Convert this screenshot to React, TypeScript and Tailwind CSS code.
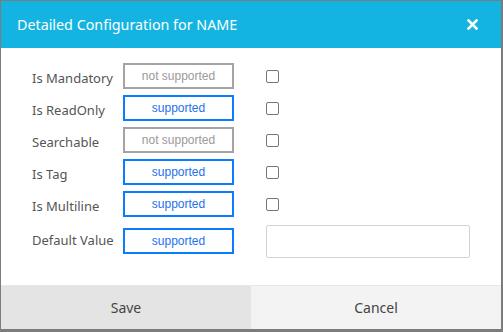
const rows = [
  { label: "Is Mandatory", supported: false },
  { label: "Is ReadOnly", supported: true },
  { label: "Searchable", supported: false },
  { label: "Is Tag", supported: true },
  { label: "Is Multiline", supported: true },
];

function StatusBox({ supported }: { supported: boolean }) {
  return (
    <div
      className={
        supported
          ? "flex h-[26px] w-[111px] items-center justify-center border-2 border-[#0a7cff] text-[12px] text-[#1a73f0]"
          : "flex h-[26px] w-[111px] items-center justify-center border-2 border-[#a3a3a3] text-[12px] text-[#9a9a9a]"
      }
      style={{ fontFamily: '"Liberation Sans", Arial, sans-serif' }}
    >
      {supported ? "supported" : "not supported"}
    </div>
  );
}

export default function App() {
  return (
    <div
      className="flex h-[332px] w-[503px] bg-[#7c7c7c] pt-[1px] pr-[2px] pb-[3px] pl-[1px]"
      style={{ fontFamily: '"Noto Sans", "Open Sans", sans-serif' }}
    >
      <div className="flex flex-1 flex-col bg-white">
        <div className="flex h-[47px] items-center justify-between bg-[#14b4e2] pl-[16px] pr-[23px]">
          <span className="text-[14.3px] text-white">Detailed Configuration for NAME</span>
          <svg width="11" height="11" viewBox="0 0 11 11">
            <path d="M1.5 1.5 L9.5 9.5 M9.5 1.5 L1.5 9.5" stroke="white" strokeWidth="2.6" strokeLinecap="square" />
          </svg>
        </div>

        <div className="flex flex-1 flex-col pt-[12px] pl-[31px]">
          {rows.map((row) => (
            <div key={row.label} className="flex h-[32px] items-center">
              <div className="w-[91px] pt-[6px] text-[13px] text-[#555]">{row.label}</div>
              <StatusBox supported={row.supported} />
              <div className="ml-[32px] h-[13px] w-[13px] rounded-[2px] border border-[#767676] bg-white"></div>
            </div>
          ))}
          <div className="mt-[4px] flex h-[34px] items-center">
            <div className="w-[91px] text-[13px] text-[#555]">Default Value</div>
            <StatusBox supported={true} />
            <div className="ml-[32px] h-[33px] w-[204px] rounded-[2px] border border-[#d2d2d8] bg-white"></div>
          </div>
        </div>

        <div className="flex h-[44px] border-t border-[#e8e8e8]">
          <button className="flex-1 bg-[#e4e4e4] text-[14px] text-[#444]">Save</button>
          <button className="flex-1 bg-[#f3f3f3] text-[14px] text-[#444]">Cancel</button>
        </div>
      </div>
    </div>
  );
}
